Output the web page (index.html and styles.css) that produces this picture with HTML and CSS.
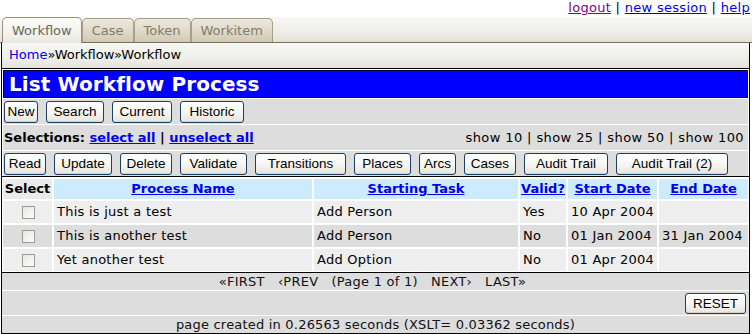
FILE: index.html
```html
<!DOCTYPE html>
<html>
<head>
<meta charset="utf-8">
<link rel="stylesheet" href="styles.css">
</head>
<body>
<div class="toplinks"><a class="visited" href="#">logout</a> | <a href="#">new session</a> | <a href="#">help</a></div>
<div class="tabbar">
  <div class="tab active">Workflow</div>
  <div class="tab">Case</div>
  <div class="tab">Token</div>
  <div class="tab">Workitem</div>
</div>
<div class="frame">
  <div class="crumbs"><a href="#">Home</a>»Workflow»Workflow</div>
  <div class="content">
    <div class="title">List Workflow Process</div>
    <div class="bar buttons">
      <span class="btn w34">New</span>
      <span class="btn w58">Search</span>
      <span class="btn w60">Current</span>
      <span class="btn w64">Historic</span>
    </div>
    <div class="bar selections">
      <div class="sel"><b>Selections: <a href="#">select all</a> | <a href="#">unselect all</a></b></div>
      <div class="show">show 10 | show 25 | show 50 | show 100</div>
    </div>
    <div class="bar buttons">
      <span class="btn w42">Read</span>
      <span class="btn w58">Update</span>
      <span class="btn w52">Delete</span>
      <span class="btn w67">Validate</span>
      <span class="btn w91">Transitions</span>
      <span class="btn w57">Places</span>
      <span class="btn w37">Arcs</span>
      <span class="btn w52">Cases</span>
      <span class="btn w84">Audit Trail</span>
      <span class="btn w112">Audit Trail (2)</span>
    </div>
  </div>
  <div class="grid">
    <div class="th plain">Select</div>
    <div class="th"><a href="#">Process Name</a></div>
    <div class="th"><a href="#">Starting Task</a></div>
    <div class="th"><a href="#">Valid?</a></div>
    <div class="th"><a href="#">Start Date</a></div>
    <div class="th"><a href="#">End Date</a></div>

    <div class="td light chk"><span class="box"></span></div>
    <div class="td light">This is just a test</div>
    <div class="td light">Add Person</div>
    <div class="td light">Yes</div>
    <div class="td light">10 Apr 2004</div>
    <div class="td light"></div>

    <div class="td dark chk"><span class="box"></span></div>
    <div class="td dark">This is another test</div>
    <div class="td dark">Add Person</div>
    <div class="td dark">No</div>
    <div class="td dark">01 Jan 2004</div>
    <div class="td dark">31 Jan 2004</div>

    <div class="td light chk"><span class="box"></span></div>
    <div class="td light">Yet another test</div>
    <div class="td light">Add Option</div>
    <div class="td light">No</div>
    <div class="td light">01 Apr 2004</div>
    <div class="td light"></div>
  </div>
  <div class="pager">«FIRST&nbsp;&nbsp; ‹PREV&nbsp;&nbsp; (Page 1 of 1)&nbsp;&nbsp; NEXT›&nbsp;&nbsp; LAST»</div>
  <div class="resetrow"><span class="btn w61">RESET</span></div>
  <div class="footer">page created in 0.26563 seconds (XSLT= 0.03362 seconds)</div>
</div>
</body>
</html>
```

FILE: styles.css
```css
html, body {
  margin: 0;
  padding: 0;
  background: #fff;
}
body {
  font-family: "DejaVu Sans", Verdana, sans-serif;
  font-size: 13px;
  color: #000;
  width: 752px;
}
a { color: #0000ee; }
a.visited { color: #800080; }

.toplinks {
  height: 17px;
  line-height: 15px;
  text-align: right;
  padding-right: 2px;
  letter-spacing: 0.3px;
}

.tabbar {
  display: flex;
  align-items: flex-end;
  height: 25px;
  padding-left: 2px;
  border-bottom: 1px solid #7d6d5c;
  background: linear-gradient(#f8f8f5, #eeede7 60%, #e2e0d6);
}
.tab {
  height: 23px;
  line-height: 23px;
  padding: 0 9px;
  font-size: 13px;
  color: #857b6a;
  border: 1px solid #a99f88;
  border-bottom: none;
  border-radius: 5px 5px 0 0;
  background: linear-gradient(#ece9dd, #dcd7c6 60%, #d0c9b4);
}
.tab.active {
  height: 25px;
  line-height: 25px;
  margin-bottom: -1px;
  color: #6b6658;
  border-color: #9b907c;
  background: linear-gradient(#fbfbf8, #f2f2ec 60%, #e8e7e0);
}

.frame {
  margin-left: 1px;
  width: 747px;
  border: 1px solid #000;
  border-top: none;
}
.crumbs {
  height: 25px;
  line-height: 24px;
  padding-left: 7px;
  border-bottom: 1px solid #000;
  background: linear-gradient(#f7f7f3, #efefea 60%, #e4e2d9);
}
.crumbs a { text-decoration: none; }

.content {
  background: #fff;
  padding: 1px 1px 0 1px;
  display: flex;
  flex-direction: column;
  gap: 1px;
}
.title {
  height: 26px;
  line-height: 26px;
  border: 1px solid #00003a;
  background: #0000ff;
  color: #fff;
  font-weight: bold;
  font-size: 20px;
  letter-spacing: 0.1px;
  padding-left: 5px;
}
.bar {
  background: #dddddd;
  height: 25px;
}
.buttons {
  display: flex;
  gap: 8px;
  padding: 2px 0 0 1px;
  box-sizing: border-box;
}
.selections {
  display: flex;
  justify-content: space-between;
  align-items: center;
  padding: 0 4px 0 1px;
}
.sel a { color: #0000ee; }
.show { letter-spacing: 0.4px; }

.btn {
  display: inline-block;
  box-sizing: border-box;
  height: 22px;
  line-height: 20px;
  text-align: center;
  font-family: "Liberation Sans", Arial, sans-serif;
  font-size: 13.5px;
  color: #000;
  border: 1px solid #1c3f66;
  border-radius: 3px;
  background: linear-gradient(#ffffff, #f6f6f3 50%, #e6e5de);
  box-shadow: inset 0 -1px 0 #d6d2c4;
}
.w34 { width: 34px; }
.w37 { width: 37px; }
.w42 { width: 42px; }
.w52 { width: 52px; }
.w57 { width: 57px; }
.w58 { width: 58px; }
.w60 { width: 60px; }
.w61 { width: 61px; height: 21px; line-height: 19px; }
.w64 { width: 64px; }
.w67 { width: 67px; }
.w84 { width: 84px; }
.w91 { width: 91px; }
.w112 { width: 112px; }

.grid {
  display: grid;
  grid-template-columns: 49px 258px 204px 46px 89px 89px;
  grid-template-rows: 20px 22px 22px 22px;
  gap: 2px;
  padding: 2px 0 1px 1px;
  background: #fff;
  border-top: 1px solid #000;
  border-bottom: 1px solid #000;
}
.th {
  background: #ccecfe;
  text-align: center;
  font-weight: bold;
  line-height: 20px;
  white-space: nowrap;
}
.th.plain { background: #eaeaea; }
.td {
  line-height: 22px;
  padding: 0 3px;
  white-space: nowrap;
  letter-spacing: 0.25px;
}
.td.light { background: #eeeeee; }
.td.dark { background: #dddddd; }
.chk {
  display: flex;
  align-items: center;
  justify-content: center;
  padding: 0;
}
.box {
  width: 11px;
  height: 11px;
  border: 1px solid #9c9c94;
  background: linear-gradient(135deg, #e6e5de, #fdfdfb);
  margin-left: 2px;
}

.pager {
  background: #dddddd;
  height: 17px;
  line-height: 17px;
  text-align: center;
  color: #111;
  letter-spacing: 0.25px;
  padding-right: 6px;
}
.resetrow {
  margin-top: 1px;
  background: #dddddd;
  height: 24px;
  display: flex;
  justify-content: flex-end;
  align-items: center;
  padding-right: 3px;
}
.footer {
  margin-top: 1px;
  background: #dddddd;
  height: 17px;
  line-height: 17px;
  text-align: center;
  color: #111;
  letter-spacing: 0.2px;
}
```
